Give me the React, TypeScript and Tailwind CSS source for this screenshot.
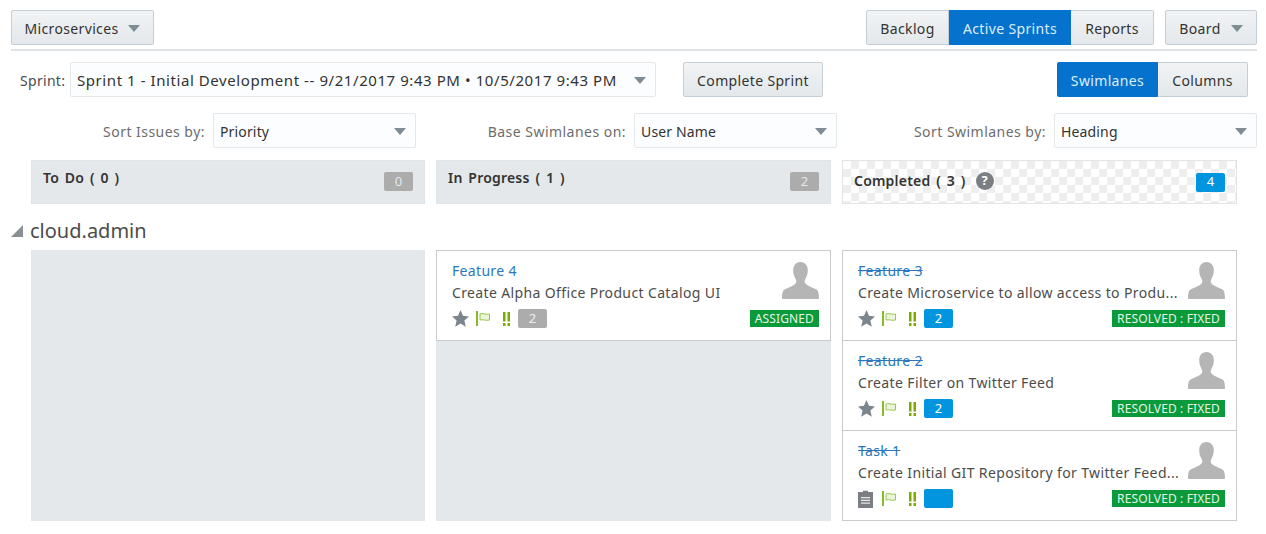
const font = "font-['Noto_Sans','Lato',sans-serif]";

function Caret({ className = "" }: { className?: string }) {
  return (
    <svg width="12" height="7" viewBox="0 0 12 7" className={className}>
      <path d="M0 0h12L6 7z" fill="#7f8c94" />
    </svg>
  );
}

function Button({ label, active, caret, className = "" }: { label: string; active?: boolean; caret?: boolean; className?: string }) {
  return (
    <div
      className={`flex h-[35px] items-center justify-center border pt-[1px] text-[14px] tracking-[0.35px] ${
        active
          ? "border-[#0572ce] bg-[#0572ce] text-[#dcefff]"
          : "border-[#c4ced7] bg-gradient-to-b from-[#f1f3f5] to-[#e4e8ea] text-[#333333]"
      } ${className}`}
    >
      {label}
      {caret && <Caret className="ml-[10px]" />}
    </div>
  );
}

function Select({ value, className = "" }: { value: string; className?: string }) {
  return (
    <div className={`flex h-[35px] items-center justify-between rounded-[2px] border border-[#e4e8ea] bg-[#fcfdfe] pl-[6px] pr-[9px] pt-[1px] text-[#333333] ${className}`}>
      <span className="whitespace-nowrap">{value}</span>
      <Caret />
    </div>
  );
}

function SortField({ label, value, className }: { label: string; value: string; className: string }) {
  return (
    <div className={`flex items-center justify-end gap-[8px] ${className}`}>
      <span className="pt-[1px] text-[14px] tracking-[0.47px] text-[#6d6d6d]">{label}</span>
      <Select value={value} className="w-[203px] text-[14px] tracking-[0.15px]" />
    </div>
  );
}

function ColumnHeader({ title, count, done }: { title: string; count: string; done?: boolean }) {
  return (
    <div
      className={`flex h-[44px] justify-between border border-[#dfe4e8] pl-[11px] pr-[11px] ${
        done
          ? "items-center bg-white bg-[conic-gradient(#eeeeee_25%,#ffffff_0_50%,#eeeeee_0_75%,#ffffff_0)] bg-[size:16px_16px]"
          : "items-start bg-[#e4e8ea] pt-[6px]"
      }`}
    >
      <div className={`flex items-center gap-[10px] text-[14px] font-semibold tracking-[0.2px] text-[#333333] [word-spacing:2px] ${done ? "-mt-[3px]" : ""}`}>
        {title}
        {done && (
          <span className="flex h-[18px] w-[18px] items-center justify-center rounded-full bg-[#7b7f83] text-[13px] font-bold leading-none text-white">?</span>
        )}
      </div>
      <span
        className={`flex h-[19px] w-[29px] items-center justify-center rounded-[2px] text-[13px] ${done ? "bg-[#0095de] text-white" : "mt-[5px] bg-[#acacac] text-[#e4e8ea]"}`}
      >
        {count}
      </span>
    </div>
  );
}

function Person() {
  return (
    <svg width="37" height="37" viewBox="0 0 38 38" className="shrink-0">
      <path
        d="M19 0c-5 0-7.500 3.800-7.500 8.500 0 3.600 1 6.500 2.500 9 1 1.700 1 3.500-.5 5-2.500 2.200-6.500 3.300-10.500 5.500C.8 29.200.2 31.500 0 37c0 .6.400 1 1 1h36c.6 0 1-.4 1-1-.2-5.500-.8-7.800-3-9-4-2.200-8-3.300-10.500-5.500-1.500-1.500-1.500-3.300-.5-5 1.500-2.500 2.500-5.400 2.500-9C26.500 3.800 24 0 19 0z"
        fill="#b5b5b5"
      />
    </svg>
  );
}

function Star() {
  return (
    <svg width="17" height="17" viewBox="0 0 17 17">
      <path d="M8.500 0l2.500 5.800 6 .6-4.600 4.100 1.400 6.200-5.300-3.300-5.300 3.300 1.400-6.200L0 6.400l6-.6z" fill="#7b858d" />
    </svg>
  );
}

function Clipboard() {
  return (
    <svg width="15" height="18" viewBox="0 0 15 18">
      <path d="M5 2V.8h5V2h5v16H0V2z" fill="#7b7f83" />
      <path d="M3 7h9v1.200H3zM3 9.800h9V11H3zM3 12.600h9v1.200H3z" fill="#e8e8e8" />
    </svg>
  );
}

function Flag() {
  return (
    <svg width="15" height="15" viewBox="0 0 15 15">
      <path d="M0 0h2v15H0z" fill="#86bc25" />
      <path d="M4 3c3-1.300 4.500 1 9.500 0v6c-4 1-6.500-1-9.500 0z" fill="#eaf4d8" stroke="#9bc84a" />
    </svg>
  );
}

function Priority() {
  return (
    <svg width="7" height="14" viewBox="0 0 7 14">
      <path d="M0 0h2.500v9.500H0zM4.500 0H7v9.500H4.500zM0 11h2.500v3H0zM4.500 11H7v3H4.500z" fill="#79ab00" />
    </svg>
  );
}

type Issue = { key: string; summary: string; points: string; status: string; done?: boolean; task?: boolean };

function Card({ issue }: { issue: Issue }) {
  return (
    <div className="flex h-[90px] flex-col border-b border-[#cbcbcb] bg-white px-[15px] pt-[9px]">
      <div className="flex h-[42px] items-start justify-between">
        <div className="min-w-0">
          <div className={`text-[14px] leading-[21px] tracking-[0.33px] text-[#2a77bd] ${issue.done ? "line-through" : ""}`}>{issue.key}</div>
          <div className="mt-[1px] whitespace-nowrap text-[14px] leading-[21px] tracking-[0.37px] text-[#4c4c4c]">{issue.summary}</div>
        </div>
        <div className="-mr-[4px] mt-[2px]"><Person /></div>
      </div>
      <div className="mt-[7px] flex items-center">
        <div className="flex w-[24px] items-center">{issue.task ? <Clipboard /> : <Star />}</div>
        <div className="flex w-[27px] items-center"><Flag /></div>
        <div className="flex w-[15px] items-center"><Priority /></div>
        <span
          className={`flex h-[19px] w-[29px] items-center justify-center rounded-[2px] text-[13px] ${issue.done ? "bg-[#0095de] text-white" : "bg-[#acacac] text-[#eeeeee]"}`}
        >
          {issue.points}
        </span>
        <span className="-mr-[4px] ml-auto flex h-[17px] items-center bg-[#0a9a3c] px-[5px] text-[12px] tracking-[0.12px] text-[#e4f5e4]">{issue.status}</span>
      </div>
    </div>
  );
}

const inProgress: Issue[] = [
  { key: "Feature 4", summary: "Create Alpha Office Product Catalog UI", points: "2", status: "ASSIGNED" },
];

const completed: Issue[] = [
  { key: "Feature 3", summary: "Create Microservice to allow access to Produ...", points: "2", status: "RESOLVED : FIXED", done: true },
  { key: "Feature 2", summary: "Create Filter on Twitter Feed", points: "2", status: "RESOLVED : FIXED", done: true },
  { key: "Task 1", summary: "Create Initial GIT Repository for Twitter Feed...", points: "", status: "RESOLVED : FIXED", done: true, task: true },
];

export default function App() {
  return (
    <div className={`h-[534px] w-[1266px] overflow-hidden bg-white pl-[11px] pr-[9px] pt-[10px] ${font}`}>
      {/* top bar */}
      <div className="flex items-start justify-between border-b-2 border-[#dfe3e6] pb-[4px]">
        <Button label="Microservices" caret className="w-[143px] rounded-[2px]" />
        <div className="flex">
          <div className="flex">
            <Button label="Backlog" className="w-[83px] rounded-l-[2px]" />
            <Button label="Active Sprints" active className="w-[122px]" />
            <Button label="Reports" className="w-[83px] rounded-r-[2px] border-l-0" />
          </div>
          <Button label="Board" caret className="ml-[11px] w-[92px] rounded-[2px]" />
        </div>
      </div>

      {/* sprint row */}
      <div className="mt-[11px] flex items-center pl-[9px] pr-[9px]">
        <span className="w-[45px] pt-[1px] text-[14px] tracking-[0.3px] text-[#4c4c4c]">Sprint:</span>
        <Select value="Sprint 1 - Initial Development -- 9/21/2017 9:43 PM • 10/5/2017 9:43 PM" className="ml-[5px] w-[586px] text-[15px] tracking-[0.57px]" />
        <Button label="Complete Sprint" className="ml-[27px] w-[140px] rounded-[2px]" />
        <div className="ml-auto flex">
          <Button label="Swimlanes" active className="w-[101px] rounded-l-[2px]" />
          <Button label="Columns" className="w-[90px] rounded-r-[2px] border-l-0" />
        </div>
      </div>

      {/* sort row */}
      <div className="mt-[16px] flex">
        <SortField label="Sort Issues by:" value="Priority" className="w-[405px]" />
        <SortField label="Base Swimlanes on:" value="User Name" className="w-[421px]" />
        <SortField label="Sort Swimlanes by:" value="Heading" className="w-[420px]" />
      </div>

      {/* column headers */}
      <div className="mt-[12px] ml-[20px] grid w-[1206px] grid-cols-[394px_395px_395px] gap-[11px]">
        <ColumnHeader title="To Do ( 0 )" count="0" />
        <ColumnHeader title="In Progress ( 1 )" count="2" />
        <ColumnHeader title="Completed ( 3 )" count="4" done />
      </div>

      {/* swimlane */}
      <div className="mt-[14px] flex h-[26px] items-center gap-[7px]">
        <svg width="12" height="12" viewBox="0 0 12 12"><path d="M12 0v12H0z" fill="#8a8f93" /></svg>
        <span className="text-[20px] text-[#4c4c4c]">cloud.admin</span>
      </div>

      <div className="mt-[6px] ml-[20px] grid h-[271px] w-[1206px] grid-cols-[394px_395px_395px] gap-[11px]">
        <div className="bg-[#e4e8ea]" />
        <div className="bg-[#e4e8ea]">
          <div className="border-x border-t border-[#cbcbcb] bg-white">
            {inProgress.map((i) => <Card key={i.key} issue={i} />)}
          </div>
        </div>
        <div className="border-x border-t border-[#cbcbcb] bg-white">
          {completed.map((i) => <Card key={i.key} issue={i} />)}
        </div>
      </div>
    </div>
  );
}
